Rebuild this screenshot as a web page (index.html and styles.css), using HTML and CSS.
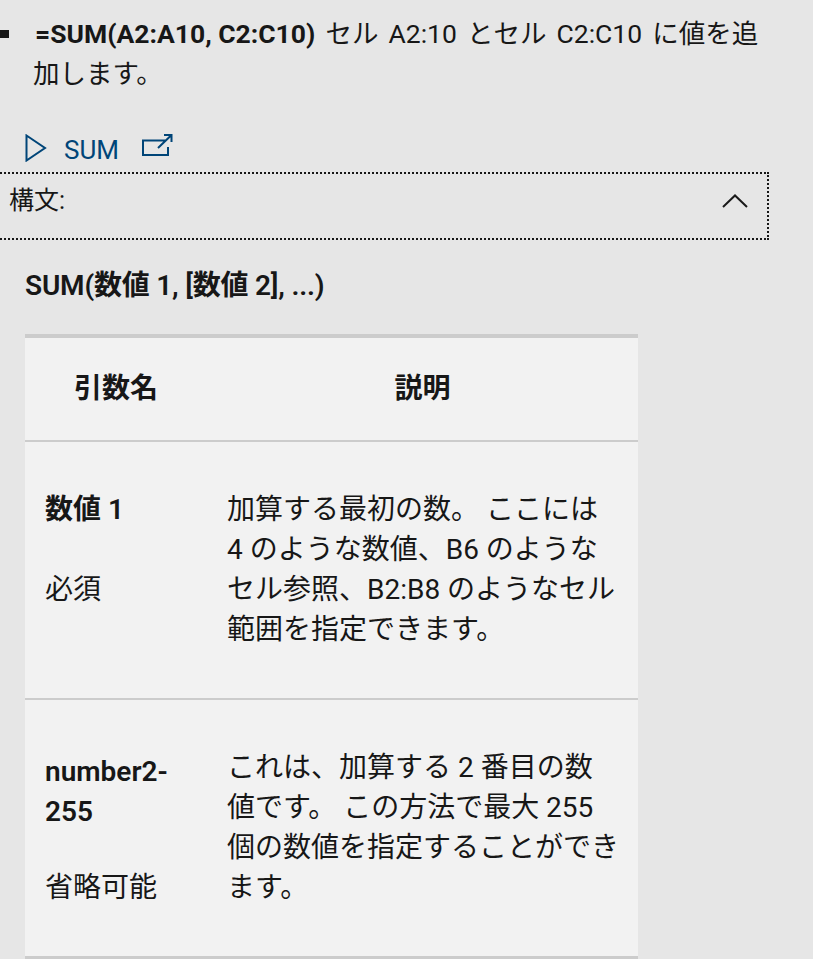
FILE: index.html
```html
<!DOCTYPE html>
<html lang="ja">
<head>
<meta charset="utf-8">
<title>SUM</title>
<link rel="stylesheet" href="styles.css">
</head>
<body>
<ul class="list">
  <li><b>=SUM(A2:A10, C2:C10)</b> セル A2:10 とセル C2:C10 に値を追加します。</li>
</ul>
<div class="links">
  <svg class="play" width="22" height="28" viewBox="0 0 22 28"><path d="M1.500 1.500 L20 14 L1.500 26.500 Z" fill="none" stroke="#004578" stroke-width="2"/></svg>
  <span class="sum">SUM</span>
  <svg class="popout" width="31" height="24" viewBox="0 0 31 24"><path d="M24 6.500 H1 V21 H26 V13 M16 14 L29 1.500 M22 1 H29.500 V8" fill="none" stroke="#004578" stroke-width="2"/></svg>
</div>
<div class="accordion">
  <span>構文:</span>
  <svg class="chevron" width="26" height="14" viewBox="0 0 26 14"><path d="M1 13 L13 1.500 L25 13" fill="none" stroke="#1a1a1a" stroke-width="2"/></svg>
</div>
<p class="syntax">SUM(数値 1, [数値 2], ...)</p>
<table class="args">
  <colgroup><col class="c1"><col class="c2"></colgroup>
  <thead><tr><th>引数名</th><th>説明</th></tr></thead>
  <tbody>
    <tr>
      <td><p class="name">数値 1</p><p>必須</p></td>
      <td><p>加算する最初の数。 ここには 4 のような数値、B6 のようなセル参照、B2:B8 のようなセル範囲を指定できます。</p></td>
    </tr>
    <tr>
      <td><p class="name name-latin">number2-255</p><p>省略可能</p></td>
      <td><p>これは、加算する 2 番目の数値です。 この方法で最大 255 個の数値を指定することができます。</p></td>
    </tr>
  </tbody>
</table>
</body>
</html>
```
FILE: styles.css
```css
* { box-sizing: border-box; }
html, body { height: 959px; }
body {
  margin: 0;
  overflow: hidden;
  background: #e6e6e6;
  color: #171717;
  font-family: "Roboto", "Noto Sans CJK JP", sans-serif;
  font-size: 28px;
  line-height: 40px;
}
p { margin: 0; }
.list {
  margin: 0;
  padding: 14px 40px 0 33px;
  list-style: none;
  font-size: 26.500px;
  word-spacing: 3.500px;
}
.list b { word-spacing: 0; }
.list li { position: relative; text-indent: 2px; }
.list li::before {
  content: "";
  position: absolute;
  left: -33px;
  top: 16px;
  width: 9px;
  height: 8px;
  background: #171717;
}
.links {
  display: flex;
  align-items: center;
  height: 38px;
  margin-top: 35px;
  margin-bottom: 5px;
  padding-left: 25px;
  color: #004578;
}
.play { flex: none; }
.sum { margin-left: 17px; font-size: 26px; line-height: 38px; padding-top: 4px; }
.popout { flex: none; margin: -4px 0 0 23px; }
.accordion {
  display: flex;
  align-items: center;
  justify-content: space-between;
  width: 772px;
  height: 68px;
  margin: 0 0 0 -3px;
  padding: 0 19px 10px 10px;
  border: 2px dotted #171717;
  font-size: 25px;
}
.syntax {
  margin: 26px 0 28px 25px;
  font-weight: 600;
  letter-spacing: -0.200px;
}
.args {
  margin-left: 25px;
  width: 613px;
  table-layout: fixed;
  border-collapse: collapse;
  background: #f2f2f2;
  border-top: 4px solid #cccccc;
  border-bottom: 3px solid #cccccc;
}
.c1 { width: 182px; }
.c2 { width: 431px; }
th {
  height: 105px;
  font-weight: 700;
  text-align: center;
  border-bottom: 2px solid #cccccc;
}
td {
  vertical-align: top;
  padding: 48px 18px 48px 20px;
  border-bottom: 2px solid #cccccc;
}
tr:last-child td { border-bottom: 0; }
.name { font-weight: 600; margin-bottom: 40px; }
.name-latin { padding-top: 4px; margin-bottom: 36px; }
```
